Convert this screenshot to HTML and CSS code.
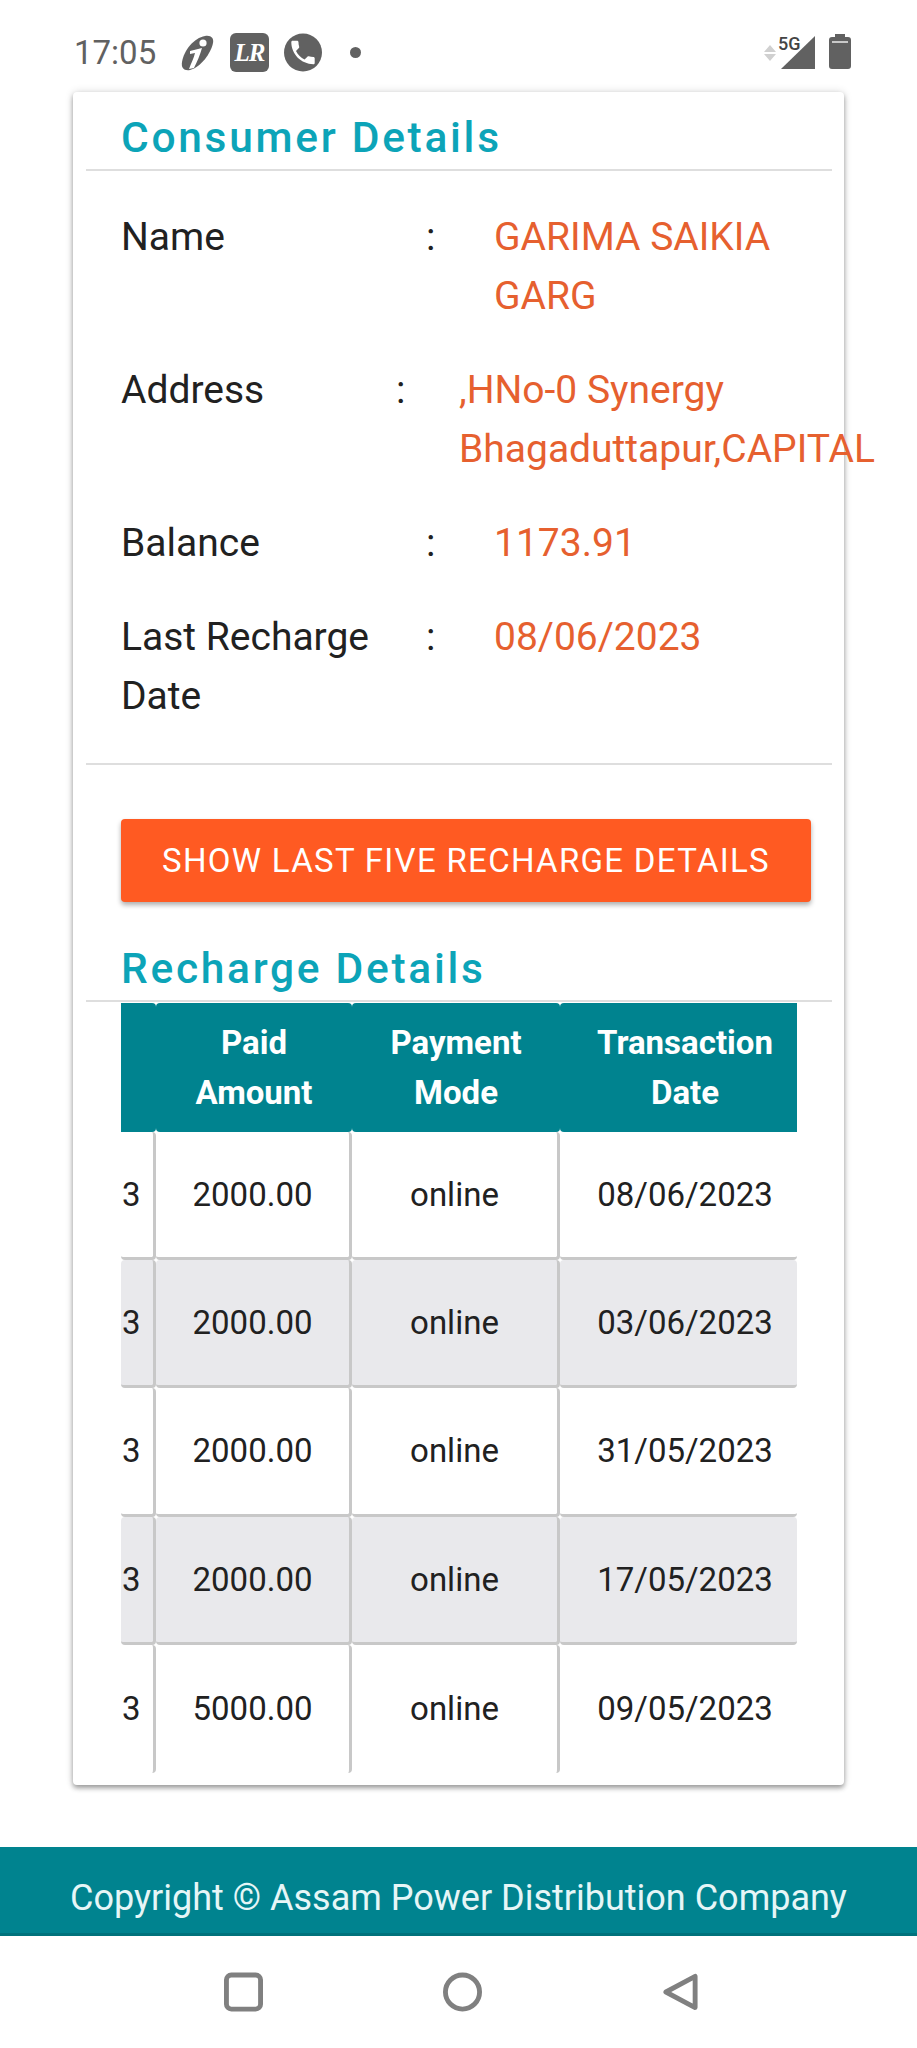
FILE: index.html
```html
<!DOCTYPE html>
<html lang="en">
<head>
<meta charset="utf-8">
<title>Consumer Details</title>
<link rel="stylesheet" href="styles.css">
</head>
<body>
<div class="phone">
  <header class="status">
    <div class="status-left">
      <span class="clock">17:05</span>
      <svg class="ic-i" viewBox="0 0 33 36"><path fill="#616161" d="M24 1C30 0 33 3 32 8 30 18 20 32 9 35 3 36 0 33 1 27 3 15 13 3 24 1z"/><circle cx="22" cy="8" r="3.600" fill="#fff"/><path fill="#fff" d="M9 16l12-3C19 20 16 27 13 33l-5 1c2-6 5-11 6-16l-5 1z"/></svg>
      <span class="ic-lr">LR</span>
      <svg class="ic-phone" viewBox="0 0 38 38"><circle cx="19" cy="19" r="19" fill="#616161"/><path fill="#fff" transform="translate(3.400 3.400) scale(1.300)" d="M6.620 10.790c1.440 2.830 3.760 5.140 6.590 6.590l2.200-2.200c.27-.27.67-.36 1.020-.24 1.120.37 2.330.57 3.570.57.550 0 1 .45 1 1V20c0 .55-.45 1-1 1-9.390 0-17-7.610-17-17 0-.55.45-1 1-1h3.500c.55 0 1 .45 1 1 0 1.250.2 2.450.57 3.570.11.350.03.740-.25 1.020l-2.200 2.200z"/></svg>
      <span class="dot"></span>
    </div>
    <div class="status-right">
      <svg class="ic-arrows" viewBox="0 0 12 16"><path fill="#d0d0d0" d="M6 0l6 7H0zM0 9h12l-6 7z"/></svg>
      <div class="signal">
        <svg viewBox="0 0 34 33"><path fill="#616161" d="M34 0v33H0z"/></svg>
        <span class="net">5G</span>
      </div>
      <svg class="ic-batt" viewBox="0 0 22 35"><path fill="#616161" d="M6 0h10v3h3q3 0 3 3v26q0 3-3 3H3q-3 0-3-3V6q0-3 3-3h3z"/><rect x="3" y="7" width="16" height="2" fill="#c9c9c9"/></svg>
    </div>
  </header>

  <main class="card">
    <h2 class="title title-first">Consumer Details</h2>
    <hr class="rule">
    <div class="details">
      <div class="row">
        <div class="label">Name</div><div class="colon">:</div>
        <div class="value">GARIMA SAIKIA GARG</div>
      </div>
      <div class="row row-addr">
        <div class="label">Address</div><div class="colon">:</div>
        <div class="value">,HNo-0 Synergy Bhagaduttapur,CAPITAL</div>
      </div>
      <div class="row">
        <div class="label">Balance</div><div class="colon">:</div>
        <div class="value">1173.91</div>
      </div>
      <div class="row">
        <div class="label">Last Recharge Date</div><div class="colon">:</div>
        <div class="value">08/06/2023</div>
      </div>
    </div>
    <hr class="rule">
    <button class="btn" type="button">SHOW LAST FIVE RECHARGE DETAILS</button>
    <h2 class="title title-second">Recharge Details</h2>
    <hr class="rule">
    <table class="grid">
      <colgroup><col class="c1"><col class="c2"><col class="c3"><col class="c4"></colgroup>
      <thead>
        <tr><th></th><th>Paid Amount</th><th>Payment Mode</th><th>Transaction Date</th></tr>
      </thead>
      <tbody>
        <tr><td class="first">3</td><td>2000.00</td><td>online</td><td>08/06/2023</td></tr>
        <tr><td class="first">3</td><td>2000.00</td><td>online</td><td>03/06/2023</td></tr>
        <tr><td class="first">3</td><td>2000.00</td><td>online</td><td>31/05/2023</td></tr>
        <tr><td class="first">3</td><td>2000.00</td><td>online</td><td>17/05/2023</td></tr>
        <tr><td class="first">3</td><td>5000.00</td><td>online</td><td>09/05/2023</td></tr>
      </tbody>
    </table>
  </main>

  <footer class="foot">Copyright © Assam Power Distribution Company</footer>

  <nav class="nav">
    <svg viewBox="0 0 40 40"><rect x="2.500" y="2.500" width="35" height="35" rx="5" fill="none" stroke="#808080" stroke-width="5"/></svg>
    <svg viewBox="0 0 40 40"><circle cx="20" cy="20" r="17.500" fill="none" stroke="#808080" stroke-width="5"/></svg>
    <svg viewBox="0 0 40 40"><path d="M35 4v32L5 20z" fill="none" stroke="#808080" stroke-width="5" stroke-linejoin="round"/></svg>
  </nav>
</div>
</body>
</html>
```
FILE: styles.css
```css
* { box-sizing: border-box; }
html, body { margin: 0; padding: 0; background: #fff; }
body { font-family: Roboto, "Liberation Sans", sans-serif; color: #212121; }
.phone { width: 917px; height: 2048px; overflow: hidden; display: flex; flex-direction: column; }

.status { height: 92px; padding: 33px 66px 0 74px; display: flex; justify-content: space-between; align-items: flex-start; }
.status-left { display: flex; align-items: center; height: 39px; }
.clock { font-size: 33px; color: #616161; width: 107px; }
.ic-i { width: 33px; height: 36px; }
.ic-lr { width: 39px; height: 39px; margin-left: 16px; border-radius: 6px; background: #616161; color: #fff; font: italic 700 25px/39px "Liberation Serif", serif; letter-spacing: -1px; text-align: center; }
.ic-phone { width: 38px; height: 39px; margin-left: 15px; }
.dot { width: 11px; height: 11px; margin-left: 28px; border-radius: 50%; background: #616161; }
.status-right { display: flex; align-items: flex-start; }
.ic-arrows { width: 12px; height: 16px; margin: 12px 5px 0 0; }
.signal { position: relative; width: 34px; height: 33px; margin-top: 3px; }
.signal svg { width: 34px; height: 33px; display: block; }
.net { position: absolute; left: -3px; top: -1px; font: 500 18px/18px Roboto, sans-serif; color: #444; }
.ic-batt { width: 22px; height: 35px; margin: 1px 0 0 14px; }

.card { margin-left: 73px; width: 771px; height: 1693px; padding: 0 12px 0 13px; background: #fff; border-radius: 4px; box-shadow: 0 3px 5px rgba(0,0,0,.35), 0 0 8px rgba(0,0,0,.14); }
.title { margin: 0 0 0 35px; font-size: 42.500px; font-weight: 500; letter-spacing: 2.700px; color: #0ca4b8; line-height: 47px; }
.title-first { padding-top: 22px; height: 77px; }
.title-second { height: 55px; margin-top: 43px; }
.rule { margin: 0; border: 0; height: 2px; background: #dedede; }
.details { padding: 37px 0 37px 35px; }
.row { display: flex; font-size: 39px; line-height: 59px; margin-bottom: 35px; }
.row:last-child { margin-bottom: 0; }
.label { width: 250px; flex: none; }
.colon { width: 123px; flex: none; padding-left: 55px; }
.value { width: 290px; flex: none; color: #e6602f; }
.row-addr .label { width: 218px; }
.row-addr .colon { width: 120px; padding-left: 57px; }
.row-addr .value { width: 425px; }

.btn { display: block; width: 690px; height: 83px; margin: 54px 0 0 35px; border: 0; border-radius: 4px; background: #ff5a22; color: #fff; font: 400 33px/80px Roboto, sans-serif; letter-spacing: 1.300px; padding: 0; box-shadow: 0 3px 5px rgba(0,0,0,.32); }

.grid { margin: 1px 0 0 35px; width: 676px; border-collapse: separate; border-spacing: 0; table-layout: fixed; }
.c1 { width: 35px; } .c2 { width: 196px; } .c3 { width: 208px; } .c4 { width: 237px; }
.grid th { height: 129px; padding: 0 6px; background: #00838f; color: #fff; font-size: 33px; line-height: 50px; font-weight: 700; text-align: center; border-radius: 4px; }
.grid th:first-child { border-radius: 0 4px 4px 0; }
.grid th:last-child { border-radius: 4px 0 0 4px; padding: 0 0 0 13px; }
.grid td { height: 128.200px; padding: 0; font-size: 33px; text-align: center; color: #212121; border-right: 3px solid #c8c8c8; border-bottom: 3px solid #c8c8c8; border-radius: 4px; }
.grid td:last-child { border-right: 0; padding-left: 13px; }
.grid tbody tr:last-child td { border-bottom: 0; }
.grid tbody tr:nth-child(even) td { background: #e9e9ec; }
.grid td.first { text-align: left; padding-left: 1px; }

.foot { margin-top: 62px; height: 89px; padding-top: 28px; background: #00838f; border-bottom: 3px solid #00727c; color: #e6f6f7; font-size: 36px; line-height: 47px; text-align: center; white-space: nowrap; }

.nav { flex: 1; padding: 36px 217px 0 224px; display: flex; justify-content: space-between; align-items: flex-start; }
.nav svg { width: 39px; height: 40px; }
```
